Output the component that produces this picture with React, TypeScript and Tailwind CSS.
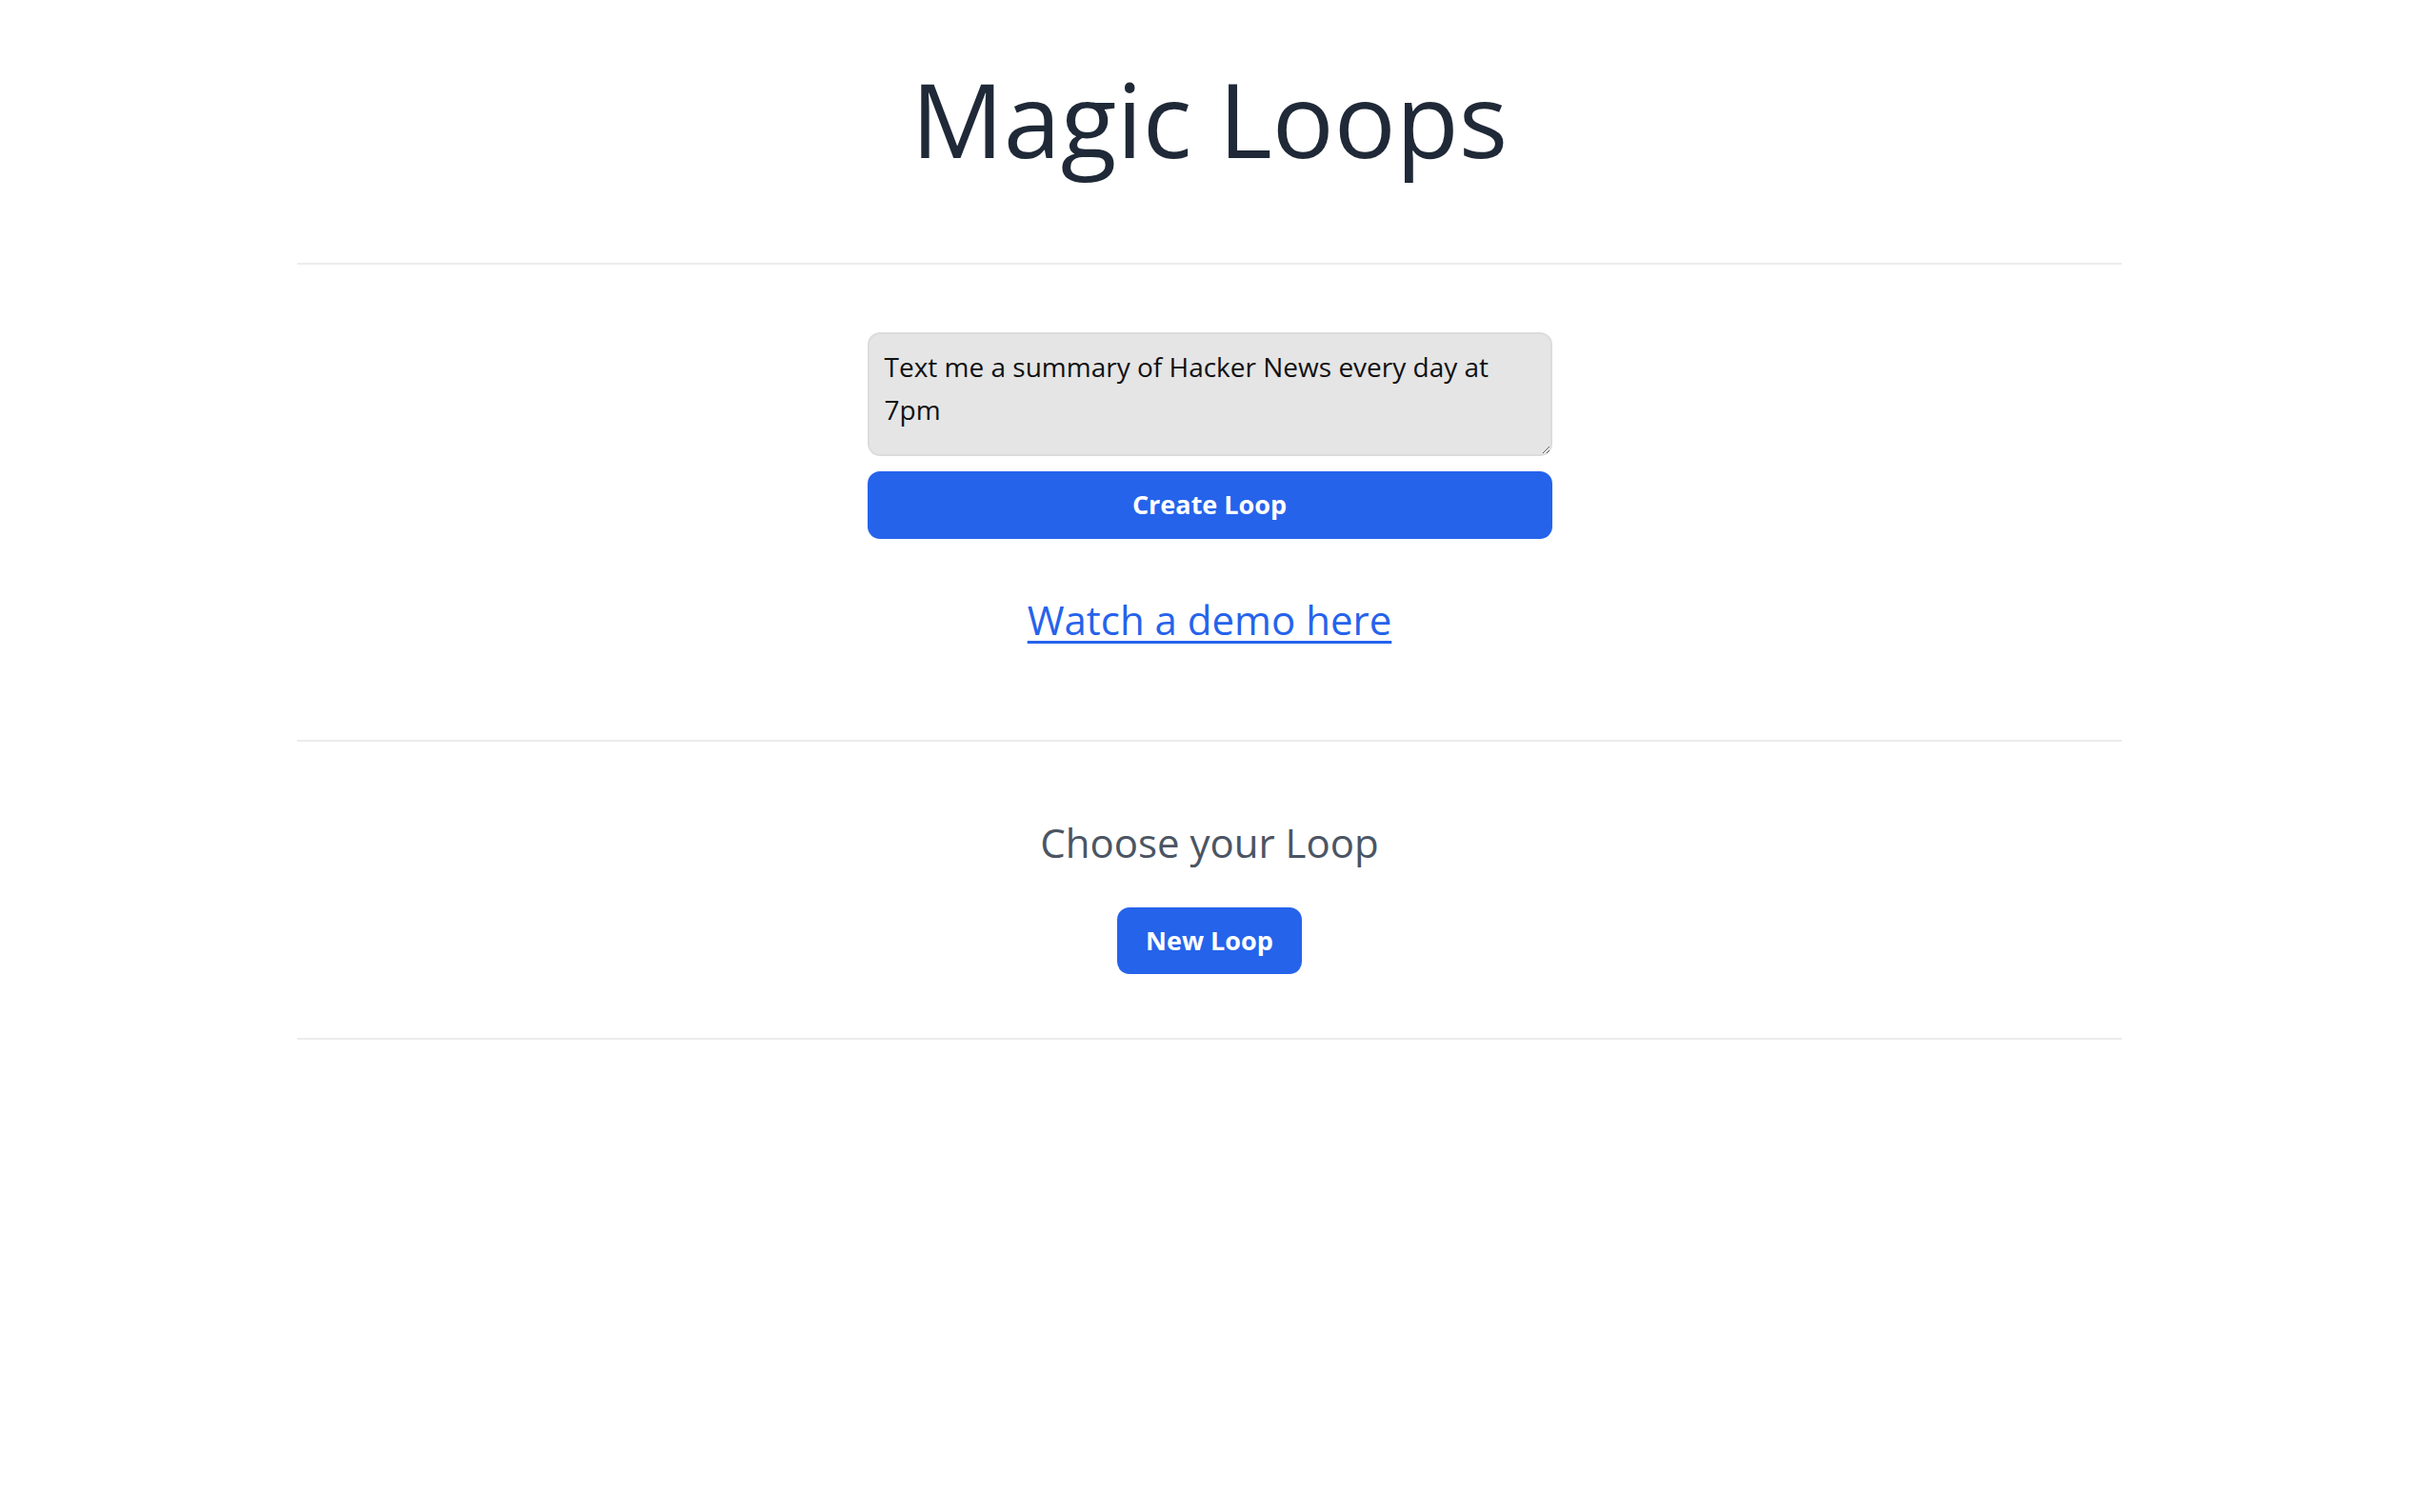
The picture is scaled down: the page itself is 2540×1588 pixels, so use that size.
import React, { useState } from 'react';

export default function App() {
  const [prompt, setPrompt] = useState('Text me a summary of Hacker News every day at 7pm');

  return (
    <div className="min-h-screen bg-white font-['Open_Sans',sans-serif] text-gray-900">
      <div className="mx-auto w-[1916px] flex flex-col items-center">
        <h1 className="pt-[71px] text-[108px] leading-none font-normal text-[#1f2937]">Magic Loops</h1>

        <div className="mt-[97px] w-full border-t-2 border-[#ececec]" />

        {/* create */}
        <div className="mt-[71px] w-[719px] flex flex-col">
          <textarea
            value={prompt}
            onChange={(e) => setPrompt(e.target.value)}
            className="h-[130px] w-full rounded-[13px] border-2 border-[#dcdcdc] bg-[#e5e5e5] px-[16px] py-[12px] text-[28px] leading-[45px] text-[#111] outline-none"
          />
          <button className="mt-[16px] h-[71px] w-full rounded-[13px] bg-[#2563eb] text-[27px] font-bold text-white">
            Create Loop
          </button>
        </div>

        <a href="#" className="mt-[55px] text-[42px] leading-[60px] text-[#2563eb] underline decoration-[3px] underline-offset-[6px]">
          Watch a demo here
        </a>

        <div className="mt-[96px] w-full border-t-2 border-[#ececec]" />

        <h2 className="mt-[80px] text-[42px] leading-[52px] text-[#4b5563]">Choose your Loop</h2>
        <button className="mt-[42px] h-[70px] rounded-[13px] bg-[#2563eb] px-[30px] text-[27px] font-bold text-white">
          New Loop
        </button>

        <div className="mt-[67px] w-full border-t-2 border-[#ececec]" />
      </div>
    </div>
  );
}
